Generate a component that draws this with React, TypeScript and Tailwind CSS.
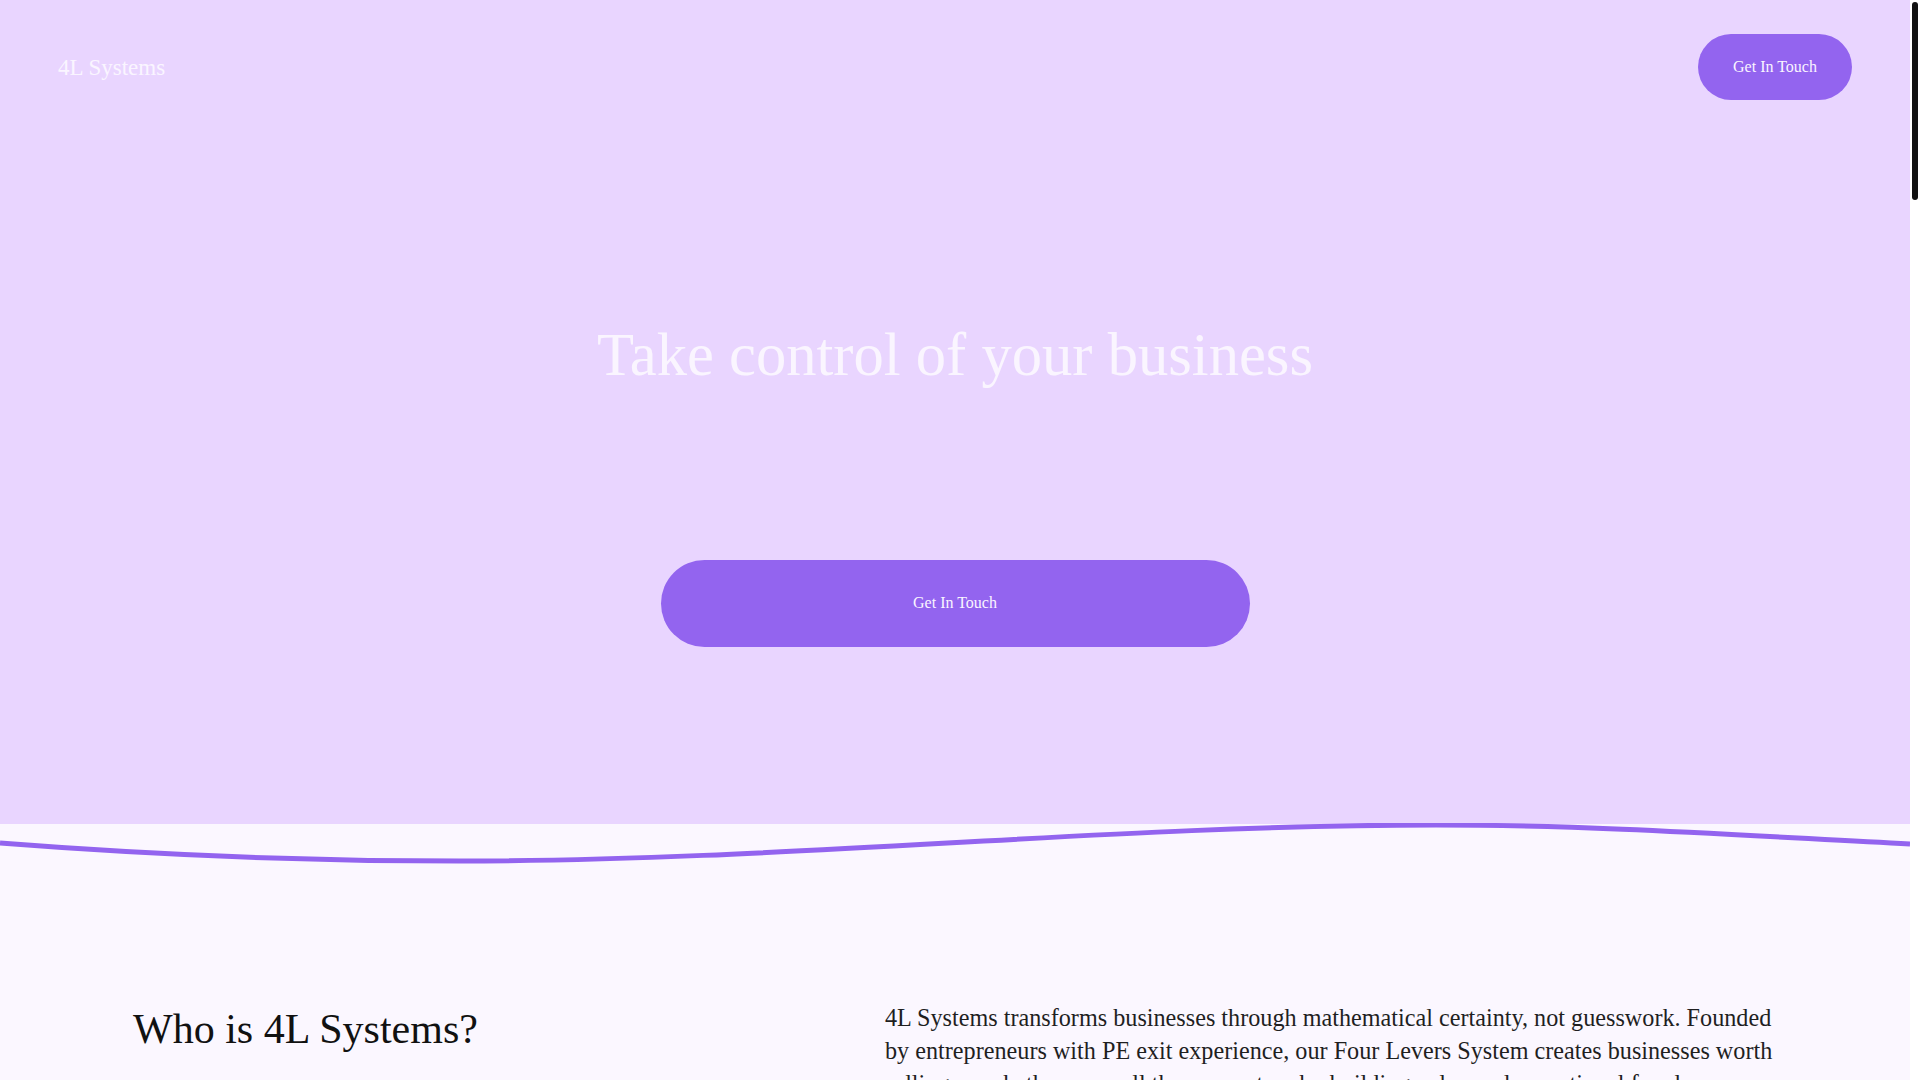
const serif = { fontFamily: '"Liberation Serif", "Times New Roman", serif' };

function Header() {
  return (
    <header className="flex items-center justify-between px-[58px] py-[34px]">
      <a className="text-[23px] leading-none text-[#faf5ff]">4L Systems</a>
      <button className="h-[66px] w-[154px] rounded-full bg-[#9364ef] text-[16px] text-[#faf5ff]">
        Get In Touch
      </button>
    </header>
  );
}

function Hero() {
  return (
    <section className="bg-[#e9d5ff]">
      <Header />
      <div className="flex flex-col items-center pt-[191px] pb-[177px]">
        <h1 className="text-[60.6px] leading-none text-[#faf5ff]">Take control of your business</h1>
        <button className="mt-[174px] h-[87px] w-[589px] rounded-full bg-[#9364ef] text-[16px] text-[#faf5ff]">
          Get In Touch
        </button>
      </div>
    </section>
  );
}

function Wave() {
  return (
    <svg
      className="absolute left-0 top-[-1px] h-[50px] w-full"
      viewBox="0 0 1910 50"
      preserveAspectRatio="none"
      fill="none"
    >
      <path
        d="M0,20 C153,32 306,38 459,38 C785,38 1110,2 1436,2 C1594,2 1752,13 1910,21"
        stroke="#9364ef"
        strokeWidth="5"
      />
    </svg>
  );
}

function About() {
  return (
    <section className="relative min-h-[1400px] bg-[#fbf7ff] pt-[177px]">
      <Wave />
      <div className="flex items-start pl-[133px]">
        <h2 className="mt-[3px] w-[752px] shrink-0 text-[42px] leading-[1.2] text-[#111111]">Who is 4L Systems?</h2>
        <p className="w-[905px] text-[24.2px] leading-[33px] text-[#1f1f1f]">
          4L Systems transforms businesses through mathematical certainty, not guesswork. Founded by
          entrepreneurs with PE exit experience, our Four Levers System creates businesses worth
          selling — whether you sell them or not — by building value and operational freedom.
        </p>
      </div>
    </section>
  );
}

function ScrollBar() {
  return (
    <div className="fixed right-0 top-0 h-screen w-[10px] bg-white">
      <div className="mx-[2px] mt-[2px] h-[198px] rounded-full bg-[#111111]" />
    </div>
  );
}

export default function App() {
  return (
    <div style={serif} className="bg-white">
      <div className="mr-[10px]">
        <Hero />
        <About />
      </div>
      <ScrollBar />
    </div>
  );
}
